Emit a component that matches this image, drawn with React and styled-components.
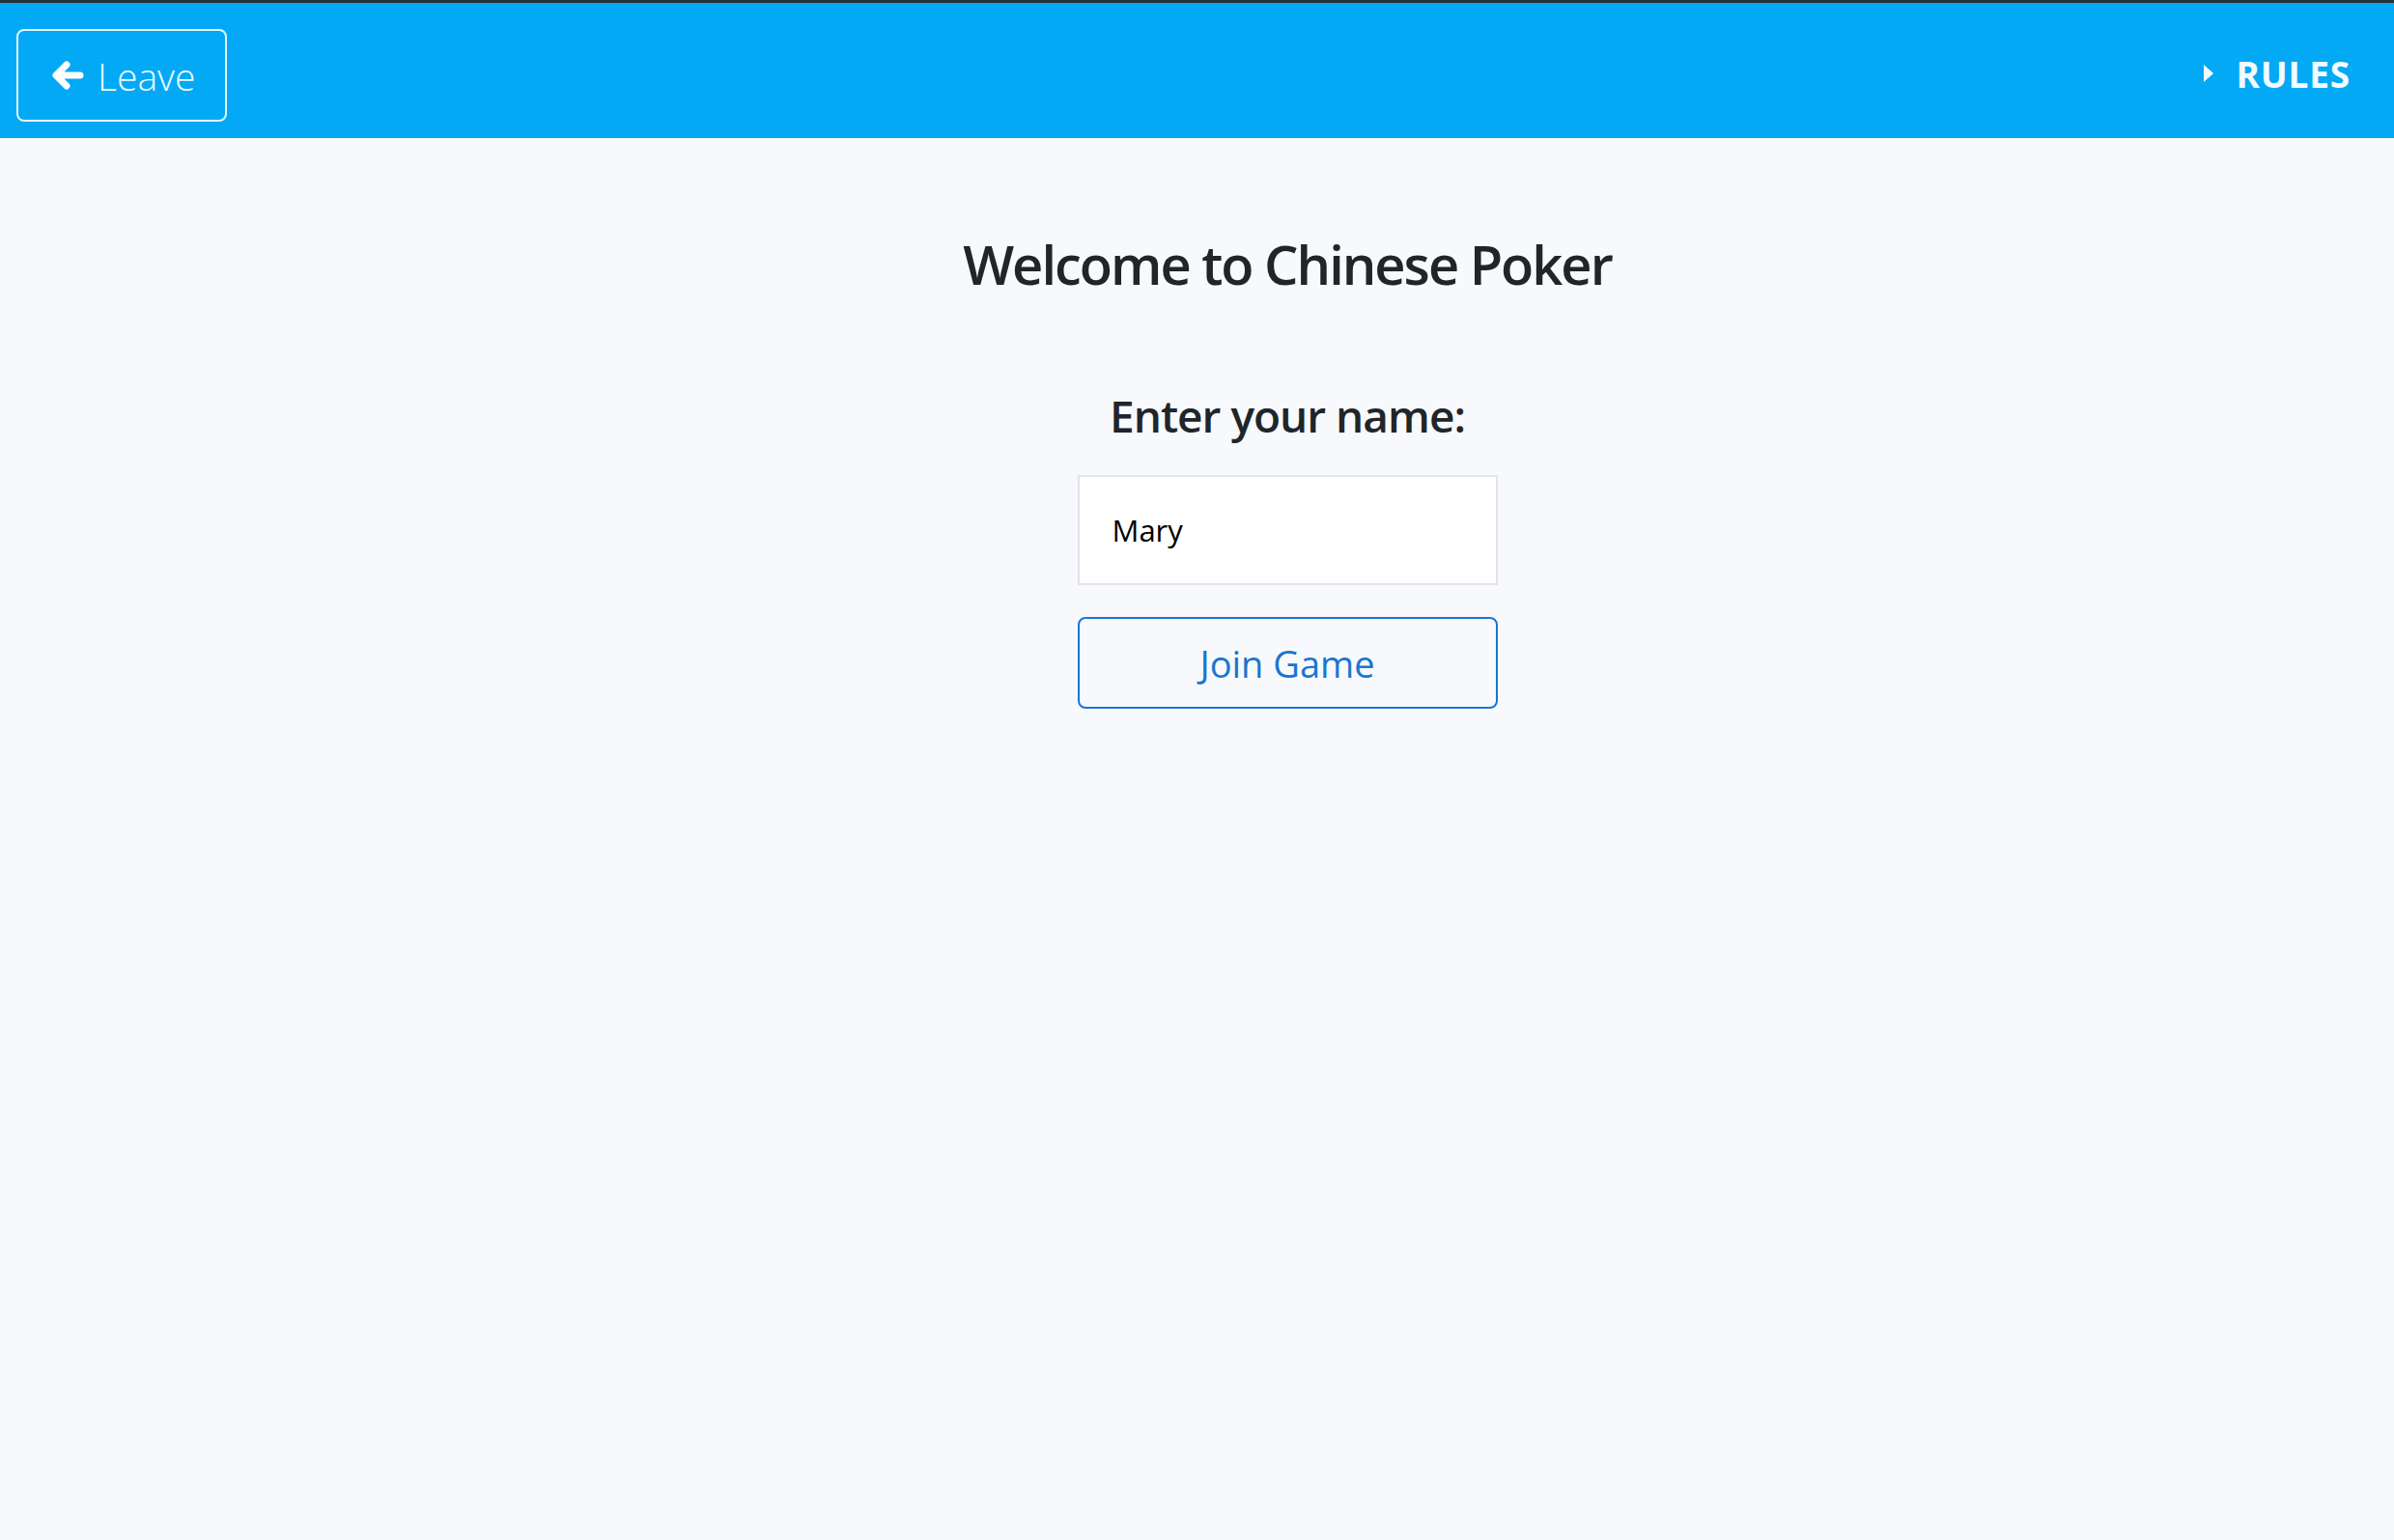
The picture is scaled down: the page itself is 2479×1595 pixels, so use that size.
import React from "react";
import styled, { createGlobalStyle } from "styled-components";

const Global = createGlobalStyle`
  html, body { margin: 0; padding: 0; }
  body {
    background: #f7f9fc;
    font-family: "Open Sans", "Noto Sans", sans-serif;
    color: #212529;
  }
`;

const Page = styled.div`
  min-height: 1595px;
  background: #f7f9fc;
`;

const Header = styled.header`
  height: 140px;
  border-top: 3px solid #263238;
  background: #03a9f4;
  display: flex;
  align-items: center;
  justify-content: space-between;
  padding: 0 45px 0 17px;
`;

const LeaveButton = styled.button`
  width: 218px;
  height: 96px;
  margin-top: 10px;
  border: 2px solid #e6f7ff;
  border-radius: 8px;
  background: transparent;
  color: #eefaff;
  display: flex;
  align-items: center;
  gap: 14px;
  padding: 0 0 0 34px;
  font-family: "Open Sans", sans-serif;
  font-size: 39px;
  font-weight: 300;
  cursor: pointer;
`;

const RulesLink = styled.a`
  display: flex;
  align-items: center;
  gap: 24px;
  margin-top: 6px;
  color: #f2fbff;
  font-family: "Open Sans", sans-serif;
  font-weight: 700;
  font-size: 37px;
  letter-spacing: 0.8px;
  text-decoration: none;
`;

const Caret = styled.span`
  width: 0;
  height: 0;
  border-top: 9px solid transparent;
  border-bottom: 9px solid transparent;
  border-left: 10px solid #f2fbff;
`;

const Main = styled.main`
  display: flex;
  flex-direction: column;
  align-items: center;
  padding: 96px 0 0 187px;
`;

const Title = styled.h1`
  margin: 0;
  font-size: 56px;
  font-weight: 600;
  line-height: 68px;
  letter-spacing: -2px;
  color: #212529;
`;

const Form = styled.div`
  display: flex;
  flex-direction: column;
  align-items: center;
  margin-top: 96px;
  width: 435px;
`;

const Label = styled.label`
  font-size: 46px;
  font-weight: 600;
  line-height: 55px;
  letter-spacing: -1px;
  color: #212529;
  margin-bottom: 34px;
`;

const NameInput = styled.input`
  box-sizing: border-box;
  width: 435px;
  height: 114px;
  border: 2px solid #e2e4e8;
  background: #fff;
  padding: 0 34px;
  font-family: "Open Sans", sans-serif;
  font-size: 31px;
  color: #000;
  outline: none;
`;

const JoinButton = styled.button`
  box-sizing: border-box;
  width: 435px;
  height: 95px;
  margin-top: 33px;
  border: 2px solid #1976d2;
  border-radius: 8px;
  background: transparent;
  color: #1976d2;
  font-family: "Open Sans", sans-serif;
  font-size: 38px;
  font-weight: 400;
  cursor: pointer;
`;

const ArrowLeft = () => (
  <svg width="34" height="34" viewBox="0 0 34 34" aria-hidden="true">
    <path
      d="M30 17 H6 M16 6 L5 17 L16 28"
      fill="none"
      stroke="#ffffff"
      strokeWidth="7"
      strokeLinecap="round"
      strokeLinejoin="round"
    />
  </svg>
);

export default function App() {
  return (
    <Page>
      <Global />
      <Header>
        <LeaveButton>
          <ArrowLeft />
          Leave
        </LeaveButton>
        <RulesLink href="#">
          <Caret />
          RULES
        </RulesLink>
      </Header>
      <Main>
        <Title>Welcome to Chinese Poker</Title>
        <Form>
          <Label htmlFor="name">Enter your name:</Label>
          <NameInput id="name" defaultValue="Mary" />
          <JoinButton>Join Game</JoinButton>
        </Form>
      </Main>
    </Page>
  );
}
